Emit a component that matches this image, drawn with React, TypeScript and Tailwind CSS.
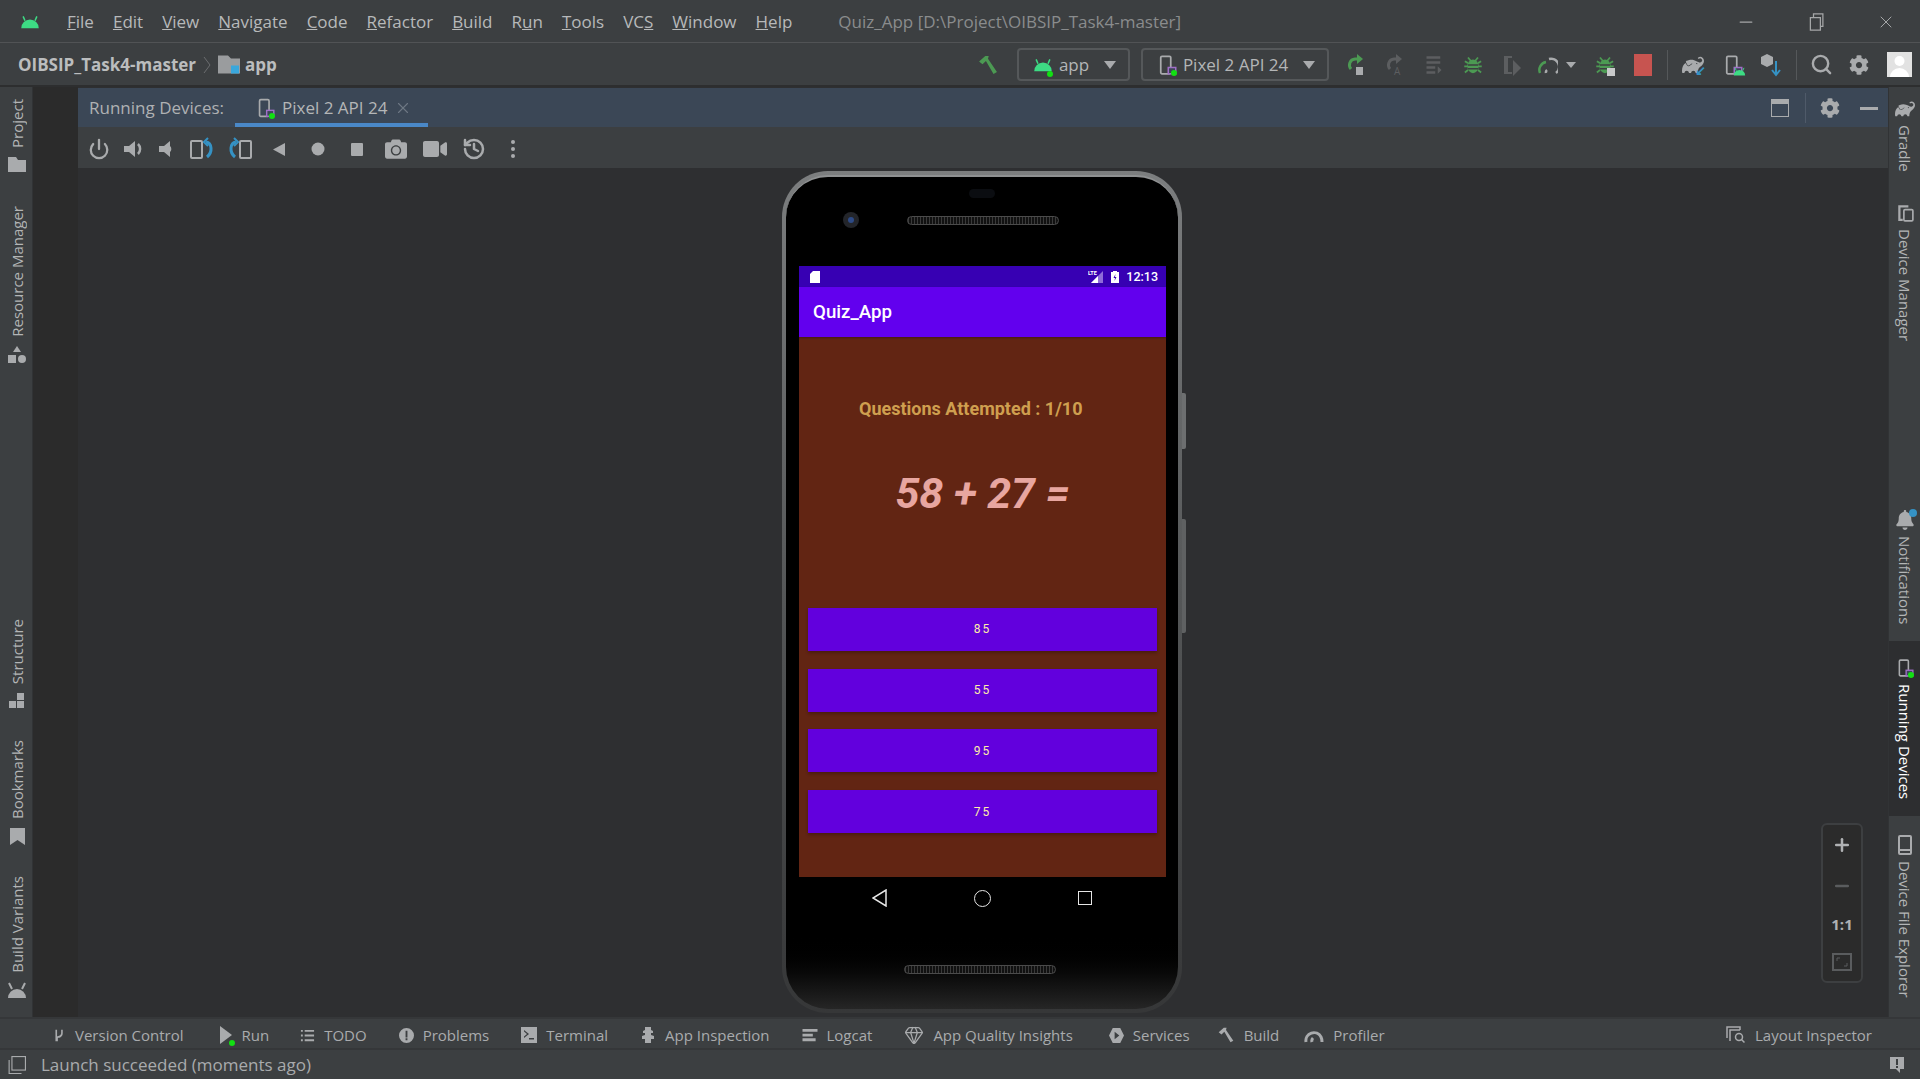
import type { ReactNode } from "react";
import { FaBell, FaCamera, FaCog, FaVideo } from "react-icons/fa";
import { SiGradle } from "react-icons/si";
import { Gem, History, Minus, Plus, Power, Search, X } from "lucide-react";

const menu = [
  ["", "F", "ile"],
  ["", "E", "dit"],
  ["", "V", "iew"],
  ["", "N", "avigate"],
  ["", "C", "ode"],
  ["", "R", "efactor"],
  ["", "B", "uild"],
  ["R", "u", "n"],
  ["", "T", "ools"],
  ["VC", "S", ""],
  ["", "W", "indow"],
  ["", "H", "elp"],
];

function Ic({ children, className = "" }: { children: ReactNode; className?: string }) {
  return (
    <svg viewBox="0 0 16 16" fill="currentColor" className={className}>
      {children}
    </svg>
  );
}

function Android({ className = "" }: { className?: string }) {
  return (
    <Ic className={className}>
      <path d="M1 13a7 7 0 0 1 14 0z" />
      <path d="M4 7 2.500 3.500M12 7l1.500-3.500" stroke="currentColor" strokeWidth="1.200" />
    </Ic>
  );
}

function GreenDot({ className = "" }: { className?: string }) {
  return <span className={`absolute h-[6px] w-[6px] rounded-full bg-[#12e012] ${className}`} />;
}

function PhoneGlyph({ className = "" }: { className?: string }) {
  return (
    <Ic className={className}>
      <rect x="3" y="1" width="8" height="14" rx="1" fill="none" stroke="currentColor" strokeWidth="1.400" />
      <rect x="9" y="10" width="6" height="5" fill="#3c4757" stroke="#9f6fc8" strokeWidth="1.200" />
    </Ic>
  );
}

function Hammer({ className = "" }: { className?: string }) {
  return (
    <Ic className={className}>
      <path d="M1.500 5.500 6 1.500h2.500L8 3.500l6.500 9.500-2.500 1.500L6.500 5 4 7.500z" />
    </Ic>
  );
}

function Bug({ className = "" }: { className?: string }) {
  return (
    <Ic className={className}>
      <ellipse cx="8" cy="9" rx="4.500" ry="5.500" />
      <path d="M4 2l2.500 3M12 2 9.500 5M1 9h14M1.500 14 4 12M14.500 14 12 12M1.500 5 4 6.500M14.500 5 12 6.500" stroke="currentColor" strokeWidth="1.400" fill="none" />
      <path d="M4 8h8M4 11h8" stroke="#3c3f41" strokeWidth="1.200" />
    </Ic>
  );
}

function Combo({ icon, label, width }: { icon: ReactNode; label: string; width: string }) {
  return (
    <div className={`flex h-[33px] shrink-0 items-center justify-between rounded-[4px] border-2 border-[#55585a] pl-[14px] pr-[12px] ${width}`}>
      <div className="flex items-center gap-[6px]">
        {icon}
        <span className="whitespace-nowrap text-[17px] leading-[20px] text-[#b4b6b7]">{label}</span>
      </div>
      <span className="h-0 w-0 border-x-[6px] border-t-[8px] border-x-transparent border-t-[#a9abad]" />
    </div>
  );
}

function SideLeft({ label, icon }: { label: string; icon: ReactNode }) {
  return (
    <div className="flex flex-col items-center gap-[9px]">
      <span className="rotate-180 text-[15px] leading-[18px] text-[#b3b5b6] [writing-mode:vertical-rl]">{label}</span>
      {icon}
    </div>
  );
}

function SideRight({ label, icon, active = false }: { label: string; icon: ReactNode; active?: boolean }) {
  return (
    <div className={`flex flex-col items-center gap-[6px] ${active ? "bg-[#2d2e30] py-[17px]" : ""}`}>
      {icon}
      <span className={`text-[15px] leading-[18px] [writing-mode:vertical-rl] ${active ? "text-white" : "text-[#b3b5b6]"}`}>{label}</span>
    </div>
  );
}

function BottomItem({ icon, label, className = "" }: { icon: ReactNode; label: string; className?: string }) {
  return (
    <div className={`flex items-center gap-[9px] ${className}`}>
      {icon}
      <span>{label}</span>
    </div>
  );
}

function Phone() {
  return (
    <div className="relative mt-[3px] h-[842px] w-[400px] rounded-[46px] bg-gradient-to-b from-[#7c7e7f] via-[#555758] to-[#363738] p-[4px]">
      <span className="absolute -right-[4px] top-[222px] h-[56px] w-[4px] rounded-r-[2px] bg-[#6d6f70]" />
      <span className="absolute -right-[4px] top-[348px] h-[114px] w-[4px] rounded-r-[2px] bg-[#5f6162]" />

      <div className="flex h-full w-full flex-col overflow-hidden rounded-[42px] border-t-2 border-[#8f9192] bg-gradient-to-b from-[#000000] from-[91%] to-[#262626]">
        <div className="flex h-[89px] shrink-0 flex-col">
          <div className="mx-auto mt-[12px] h-[9px] w-[26px] rounded-full bg-[#0b0d11]" />
          <div className="mt-[14px] flex items-center pl-[57px]">
            <div className="flex h-[16px] w-[16px] items-center justify-center rounded-full bg-[#23252a]">
              <span className="h-[6px] w-[6px] rounded-full bg-[#2d4a86]" />
            </div>
            <div className="ml-[48px] h-[9px] w-[152px] rounded-full border border-[#4b4b4b] bg-[repeating-linear-gradient(90deg,#3a3a3a_0,#3a3a3a_1px,#111_1px,#111_3px)]" />
          </div>
        </div>

        <div className="ml-[13px] flex h-[611px] w-[367px] shrink-0 flex-col bg-[#622513] font-['Roboto',sans-serif]">
          <div className="flex h-[21px] shrink-0 items-center justify-between bg-[#3700b3] pl-[11px] pr-[8px] text-white">
            <svg viewBox="0 0 10 12" fill="currentColor" className="h-[12px] w-[10px]">
              <path d="M3 0h7v12H0V3z" />
            </svg>
            <div className="flex items-center">
              <svg viewBox="0 0 16 13" className="h-[13px] w-[16px]">
                <path d="M15 1v12H3z" fill="#8f6cd9" />
                <path d="M10 6v7H3z" fill="#fff" />
                <text x="0" y="5" fontSize="5.500" fontWeight="700" fill="#fff">LTE</text>
              </svg>
              <svg viewBox="0 0 8 12" fill="currentColor" className="ml-[7px] h-[12px] w-[8px]">
                <path d="M2 1V0h4v1h2v11H0V1z" />
                <path d="M4.500 3 2.500 7H4l-.5 3 2-4H4z" fill="#3700b3" />
              </svg>
              <span className="ml-[7px] mt-[2px] text-[12.500px] font-medium leading-none">12:13</span>
            </div>
          </div>

          <div className="flex h-[50px] shrink-0 items-center bg-[#6200ee] pl-[14px] text-[18.700px] font-medium text-white shadow-[0_1px_2px_rgba(0,0,0,0.3)]">
            Quiz_App
          </div>

          <div className="flex min-h-0 flex-1 flex-col">
            <p className="ml-[60px] mt-[61px] text-[18px] font-bold leading-[21px] text-[#cf9f4f]">Questions Attempted : 1/10</p>
            <p className="mt-[49px] text-center text-[43px] font-bold italic leading-[50px] text-[#e8a6a0]">58 + 27 =</p>
            <div className="mt-auto flex flex-col gap-[17.700px] px-[9px] pb-[44px]">
              {["85", "55", "95", "75"].map((v) => (
                <div
                  key={v}
                  className="flex h-[43px] items-center justify-center bg-[#6200dd] text-[12px] font-normal tracking-[2px] text-[#ffeea8] shadow-[0_2px_3px_rgba(0,0,0,0.25)]"
                >
                  {v}
                </div>
              ))}
            </div>
          </div>
        </div>

        <div className="flex min-h-0 flex-1 flex-col text-[#e6e6e6]">
          <div className="mt-[12px] flex items-center pl-[86px]">
            <svg viewBox="0 0 15 18" fill="none" stroke="currentColor" strokeWidth="1.500" className="h-[18px] w-[15px]">
              <path d="M14 1v16L1 9z" />
            </svg>
            <span className="ml-[87px] h-[17px] w-[17px] rounded-full border-[1.500px] border-current" />
            <span className="ml-[87px] h-[14px] w-[14px] border-[1.500px] border-current" />
          </div>
          <div className="ml-[118px] mt-[58px] h-[9px] w-[152px] rounded-full border border-[#4b4b4b] bg-[repeating-linear-gradient(90deg,#3a3a3a_0,#3a3a3a_1px,#111_1px,#111_3px)]" />
        </div>
      </div>
    </div>
  );
}

export default function App() {
  return (
    <div className="flex h-[1079px] w-[1920px] flex-col overflow-hidden bg-[#3c3f41] font-['Open_Sans',sans-serif] text-[#b4b6b7]">
      {/* title bar */}
      <div className="flex h-[43px] shrink-0 items-center border-b border-[#515355] pr-[24px] pt-[1px] text-[17px]">
        <Android className="ml-[20px] h-[20px] w-[20px] text-[#3ddc84]" />
        <div className="ml-[27px] flex gap-[19px] text-[#b7b9ba]">
          {menu.map(([before, key, after], i) => (
            <span key={i}>
              {before}
              <u>{key}</u>
              {after}
            </span>
          ))}
        </div>
        <span className="ml-[46px] text-[#8a8c8d]">{"Quiz_App [D:\\Project\\OIBSIP_Task4-master]"}</span>
        <div className="ml-auto flex items-center gap-[50px] text-[#a5a7a8]">
          <Minus className="h-[20px] w-[20px]" strokeWidth={1.500} />
          <svg viewBox="0 0 16 16" fill="none" stroke="currentColor" className="h-[20px] w-[20px]">
            <rect x="3.500" y="4.500" width="8" height="10" />
            <path d="M6 4.500v-3h7.500v10h-2" />
          </svg>
          <X className="h-[20px] w-[20px]" strokeWidth={1.200} />
        </div>
      </div>

      {/* project toolbar */}
      <div className="flex h-[44px] shrink-0 items-center border-b-2 border-[#2d2e2f] pl-[18px] pt-[1px]">
        <span className="text-[17px] font-bold text-[#bbbdbe]">OIBSIP_Task4-master</span>
        <svg viewBox="0 0 8 18" fill="none" stroke="#6b6d6f" className="ml-[7px] h-[20px] w-[8px]">
          <path d="m1 1 6 8-6 8" />
        </svg>
        <svg viewBox="0 0 22 18" className="ml-[7px] h-[19px] w-[22px]">
          <path d="M0 0h10l3 3h9v15H0z" fill="#9a9c9e" />
          <rect x="13" y="10" width="8" height="8" fill="#3aa7dc" />
        </svg>
        <span className="ml-[5px] text-[17px] font-bold text-[#bbbdbe]">app</span>

        <Hammer className="ml-[700px] h-[22px] w-[22px] text-[#4c9a53]" />
        <div className="ml-[18px]">
          <Combo
            width="w-[113px]"
            label="app"
            icon={
              <span className="relative">
                <Android className="h-[20px] w-[20px] text-[#3ddc84]" />
                <GreenDot className="-bottom-[2px] right-0" />
              </span>
            }
          />
        </div>
        <div className="ml-[11px]">
          <Combo
            width="w-[188px]"
            label="Pixel 2 API 24"
            icon={
              <span className="relative">
                <PhoneGlyph className="h-[22px] w-[20px] text-[#a9abad]" />
                <GreenDot className="bottom-0 right-0" />
              </span>
            }
          />
        </div>

        <div className="ml-[17px] flex items-center gap-[19px]">
          <svg viewBox="0 0 20 22" className="h-[22px] w-[20px]">
            <path d="M13 5H9a6 6 0 0 0-4 10" fill="none" stroke="#4c9a53" strokeWidth="3" />
            <path d="M11 0l6 5-6 5z" fill="#4c9a53" />
            <rect x="10" y="13" width="7" height="8" fill="#a9abad" />
          </svg>
          <svg viewBox="0 0 20 22" className="h-[22px] w-[20px]">
            <path d="M13 5H9a6 6 0 0 0-4 10" fill="none" stroke="#5c5e60" strokeWidth="3" />
            <path d="M11 0l6 5-6 5z" fill="#5c5e60" />
            <text x="9" y="21" fontSize="10" fill="#5c5e60">A</text>
          </svg>
          <Ic className="h-[22px] w-[20px] text-[#5c5e60]">
            <path d="M2 1h11v2H2zM2 5h11v2H2zM2 9h7v2H2zM2 13h7v2H2zM11 9l3 3-3 3z" />
          </Ic>
          <Bug className="h-[22px] w-[20px] text-[#4c9a53]" />
          <svg viewBox="0 0 20 22" fill="#5c5e60" className="h-[22px] w-[20px]">
            <path d="M2 2h8v2H6v14h4v2H2zM11 6l8 8-8 8z" />
          </svg>
          <div className="flex items-center gap-[8px]">
            <svg viewBox="0 0 20 18" fill="none" strokeWidth="2.500" className="-ml-[3px] h-[18px] w-[20px]">
              <path d="M2 17a8 8 0 0 1 6-11" stroke="#4c9a53" />
              <path d="M8 17a3 3 0 0 1 1-3M11 3a8 8 0 0 1 7 14" stroke="#a9abad" />
            </svg>
            <span className="h-0 w-0 border-x-[5px] border-t-[6px] border-x-transparent border-t-[#a9abad]" />
          </div>
          <span className="relative">
            <Bug className="h-[22px] w-[20px] text-[#4c9a53]" />
            <span className="absolute bottom-0 right-0 h-[8px] w-[8px] bg-[#c8c9ca]" />
          </span>
          <span className="h-[22px] w-[18px] bg-[#c75450]" />
        </div>
        <span className="ml-[15px] h-[30px] w-px bg-[#55585a]" />
        <div className="ml-[13px] flex items-center gap-[18px]">
          <span className="relative">
            <SiGradle className="h-[22px] w-[24px] text-[#a9abad]" />
            <span className="absolute -bottom-[1px] -right-[1px] text-[13px] font-bold leading-none text-[#3592c4]">↙</span>
          </span>
          <span className="relative">
            <PhoneGlyph className="h-[24px] w-[20px] text-[#a9abad]" />
            <Android className="absolute -bottom-[1px] -right-[3px] h-[13px] w-[13px] text-[#3ddc84]" />
          </span>
          <svg viewBox="0 0 20 24" className="h-[24px] w-[20px]">
            <path d="M6 1l6 3v7l-6 3-6-3V4z" fill="#a9abad" />
            <path d="M15 8v14M11 17l4 5 4-5" fill="none" stroke="#3592c4" strokeWidth="2" />
          </svg>
        </div>
        <span className="ml-[15px] h-[30px] w-px bg-[#55585a]" />
        <Search className="ml-[13px] h-[23px] w-[23px] text-[#a9abad]" strokeWidth={2.500} />
        <FaCog className="ml-[16px] h-[20px] w-[20px] text-[#a9abad]" />
        <svg viewBox="0 0 25 25" className="ml-[18px] h-[25px] w-[25px]">
          <rect width="25" height="25" fill="#e2e2e2" />
          <circle cx="12.500" cy="9" r="5" fill="#fff" />
          <path d="M3 25a9.500 9 0 0 1 19 0z" fill="#fff" />
        </svg>
      </div>

      <div className="flex min-h-0 flex-1">
        {/* left tool strip */}
        <div className="flex h-full w-[33px] shrink-0 flex-col justify-between border-r border-[#313335] pb-[19px] pl-[2px] pt-[12px]">
          <div className="flex flex-col gap-[34px]">
            <SideLeft
              label="Project"
              icon={
                <svg viewBox="0 0 18 15" fill="#a9abad" className="h-[15px] w-[18px]">
                  <path d="M0 0h8l2 3h8v12H0z" />
                </svg>
              }
            />
            <SideLeft
              label="Resource Manager"
              icon={
                <svg viewBox="0 0 18 18" fill="#a9abad" className="h-[18px] w-[18px]">
                  <path d="M9 0l4 6H5z" />
                  <rect y="9" width="8" height="8" />
                  <circle cx="14" cy="13" r="4" />
                </svg>
              }
            />
          </div>
          <div className="flex flex-col gap-[31px]">
            <SideLeft
              label="Structure"
              icon={
                <svg viewBox="0 0 16 16" fill="#a9abad" className="h-[16px] w-[16px]">
                  <rect x="8" y="0" width="7" height="7" />
                  <rect x="0" y="8" width="7" height="7" />
                  <rect x="8" y="8" width="7" height="7" />
                </svg>
              }
            />
            <SideLeft
              label="Bookmarks"
              icon={
                <svg viewBox="0 0 15 17" fill="#a9abad" className="h-[17px] w-[15px]">
                  <path d="M0 0h15v17l-7.500-5L0 17z" />
                </svg>
              }
            />
            <SideLeft
              label="Build Variants"
              icon={
                <svg viewBox="0 0 18 16" fill="#a9abad" className="h-[16px] w-[18px]">
                  <path d="M0 16a9 9 0 0 1 18 0z" />
                  <path d="M4 7 1 1M14 7l3-6" stroke="#a9abad" strokeWidth="2" />
                </svg>
              }
            />
          </div>
        </div>

        <div className="w-[45px] shrink-0 bg-[#2b2b2b]" />

        {/* running devices panel */}
        <div className="flex min-w-0 flex-1 flex-col bg-[#2e2f31]">
          <div className="mt-[1px] flex h-[39px] shrink-0 items-center bg-[#3b4756] pl-[11px] pr-[10px] pt-[1px] text-[17px]">
            <span className="text-[#afb1b3]">Running Devices:</span>
            <div className="ml-[11px] flex h-full items-center gap-[7px] border-b-[4px] border-[#4a88c7] pl-[21px] pr-[16px] pt-[4px]">
              <span className="relative">
                <PhoneGlyph className="h-[22px] w-[19px] text-[#a9abad]" />
                <GreenDot className="bottom-0 right-0" />
              </span>
              <span className="text-[#b4b6b7]">Pixel 2 API 24</span>
              <X className="h-[18px] w-[18px] text-[#6e7884]" strokeWidth={1.500} />
            </div>
            <div className="ml-auto flex items-center">
              <svg viewBox="0 0 18 18" className="h-[18px] w-[18px]">
                <rect x="0.500" y="0.500" width="17" height="17" fill="none" stroke="#a9abad" />
                <rect width="18" height="5" fill="#a9abad" />
              </svg>
              <span className="ml-[16px] h-[30px] w-px bg-[#4f5a69]" />
              <FaCog className="ml-[14px] h-[20px] w-[20px] text-[#a9abad]" />
              <span className="ml-[20px] h-[3px] w-[18px] bg-[#a9abad]" />
            </div>
          </div>

          <div className="flex h-[41px] shrink-0 items-center gap-[15px] bg-[#3c3f41] pl-[9px] pt-[2px] text-[#a9abad]">
            <div className="flex items-center gap-[10px]">
              <Power className="h-[24px] w-[24px] p-[1px]" strokeWidth={2.500} />
              <svg viewBox="0 0 24 24" fill="currentColor" className="h-[24px] w-[24px]">
                <path d="M3 9h5l6-5v16l-6-5H3z" />
                <path d="M17 7a7 7 0 0 1 0 10" fill="none" stroke="currentColor" strokeWidth="2.500" />
              </svg>
              <svg viewBox="0 0 24 24" fill="currentColor" className="h-[24px] w-[24px]">
                <path d="M4 9h5l6-5v16l-6-5H4z" />
                <path d="M15 9a4 4 0 0 1 0 6z" />
              </svg>
            </div>
            <svg viewBox="0 0 24 24" fill="none" strokeWidth="2" className="-ml-[4px] h-[24px] w-[24px]">
              <rect x="1" y="4" width="11" height="17" rx="1" stroke="currentColor" />
              <path d="M16 5c6 1 7 10 1 15" stroke="#3592c4" strokeWidth="3" />
              <path d="M18 1l-4 4 4 4" stroke="#3592c4" strokeWidth="2" />
            </svg>
            <svg viewBox="0 0 24 24" fill="none" strokeWidth="2" className="-ml-[1px] h-[24px] w-[24px]">
              <rect x="12" y="4" width="11" height="17" rx="1" stroke="currentColor" />
              <path d="M8 5C2 6 1 15 7 20" stroke="#3592c4" strokeWidth="3" />
              <path d="M6 1l4 4-4 4" stroke="#3592c4" strokeWidth="2" />
            </svg>
            <svg viewBox="0 0 24 24" fill="currentColor" className="h-[24px] w-[24px]">
              <path d="M18 6v13L6 12.500z" />
            </svg>
            <svg viewBox="0 0 24 24" fill="currentColor" className="h-[24px] w-[24px]">
              <circle cx="12" cy="12" r="6.500" />
            </svg>
            <svg viewBox="0 0 24 24" fill="currentColor" className="h-[24px] w-[24px]">
              <rect x="6" y="6" width="12" height="13" rx="1" />
            </svg>
            <FaCamera className="h-[24px] w-[24px] p-[1px]" />
            <FaVideo className="h-[24px] w-[24px]" />
            <History className="h-[24px] w-[24px]" strokeWidth={2.500} />
            <svg viewBox="0 0 24 24" fill="currentColor" className="h-[24px] w-[24px]">
              <circle cx="12" cy="5" r="2" />
              <circle cx="12" cy="12" r="2" />
              <circle cx="12" cy="19" r="2" />
            </svg>
          </div>

          <div className="relative flex min-h-0 flex-1 justify-center pr-[2px]">
            <Phone />
            <div className="absolute bottom-[34px] right-[25px] flex h-[160px] w-[42px] flex-col items-center justify-between rounded-[6px] border-2 border-[#3d3f41] bg-[#2b2b2b] py-[10px] text-[#afb1b3]">
              <Plus className="h-[20px] w-[20px]" strokeWidth={3} />
              <Minus className="h-[20px] w-[20px] text-[#5a5c5e]" strokeWidth={3} />
              <span className="text-[15px] font-bold leading-none">1:1</span>
              <svg viewBox="0 0 20 18" fill="none" stroke="#5a5c5e" strokeWidth="2" className="h-[18px] w-[20px]">
                <rect x="1" y="1" width="18" height="16" />
                <path d="M5 8V5h3M15 10v3h-3" strokeWidth="1" />
              </svg>
            </div>
          </div>
        </div>

        {/* right tool strip */}
        <div className="flex h-full w-[32px] shrink-0 flex-col justify-between border-l border-[#313335] pb-[19px] pt-[12px]">
          <div className="flex flex-col gap-[31px]">
            <SideRight label="Gradle" icon={<SiGradle className="h-[20px] w-[20px] text-[#a9abad]" />} />
            <SideRight
              label="Device Manager"
              icon={
                <Ic className="h-[20px] w-[18px] text-[#a9abad]">
                  <path d="M2 1h9v2H4v10h2v2H2z" />
                  <rect x="7" y="5" width="8" height="10" rx="1" fill="none" stroke="currentColor" strokeWidth="1.500" />
                </Ic>
              }
            />
          </div>
          <div className="flex flex-col">
            <SideRight
              label="Notifications"
              icon={
                <span className="relative">
                  <FaBell className="h-[20px] w-[18px] text-[#a9abad]" />
                  <span className="absolute -right-[3px] -top-[1px] h-[8px] w-[8px] rounded-full bg-[#3592c4]" />
                </span>
              }
            />
            <div className="mt-[17px]">
              <SideRight
                active
                label="Running Devices"
                icon={
                  <span className="relative">
                    <PhoneGlyph className="h-[20px] w-[18px] text-[#a9abad]" />
                    <GreenDot className="bottom-0 right-0" />
                  </span>
                }
              />
            </div>
            <div className="mt-[19px]">
              <SideRight
                label="Device File Explorer"
                icon={
                  <svg viewBox="0 0 14 20" fill="none" stroke="#a9abad" strokeWidth="2" className="h-[20px] w-[14px]">
                    <rect x="1" y="1" width="12" height="18" rx="1" />
                    <path d="M1 15h12" />
                  </svg>
                }
              />
            </div>
          </div>
        </div>
      </div>

      {/* tool window bar */}
      <div className="flex h-[31px] shrink-0 items-center gap-[32px] border-t-2 border-t-[#353739] pl-[53px] pr-[48px] pt-[3px] text-[15px] text-[#a9abad]">
        <BottomItem
          label="Version Control"
          icon={
            <Ic className="h-[17px] w-[13px]">
              <path d="M3 1h2v8c2 0 5-1 5-4V1h2v4c0 5-4 6-6 6v4H3z" />
            </Ic>
          }
        />
        <BottomItem
          className="ml-[3px]"
          label="Run"
          icon={
            <span className="relative">
              <svg viewBox="0 0 14 18" fill="currentColor" className="h-[18px] w-[14px]">
                <path d="M1 0l12 9-12 9z" />
              </svg>
              <GreenDot className="-bottom-[2px] -right-[2px]" />
            </span>
          }
        />
        <BottomItem
          className="-ml-[1px]"
          label="TODO"
          icon={
            <Ic className="h-[15px] w-[15px]">
              <path d="M1 2h2v2H1zM5 2h10v2H5zM1 7h2v2H1zM5 7h10v2H5zM1 12h2v2H1zM5 12h10v2H5z" />
            </Ic>
          }
        />
        <BottomItem
          label="Problems"
          icon={
            <Ic className="h-[15px] w-[15px]">
              <path fillRule="evenodd" d="M8 0a8 8 0 1 0 0 16A8 8 0 0 0 8 0zM7 3h2v7H7zM7 11h2v2H7z" />
            </Ic>
          }
        />
        <BottomItem
          label="Terminal"
          icon={
            <Ic className="h-[16px] w-[16px]">
              <path fillRule="evenodd" d="M0 0h16v16H0zM3 3v1.500L6 7 3 9.500V11l5-4zM8 11v1.500h5V11z" />
            </Ic>
          }
        />
        <BottomItem
          label="App Inspection"
          icon={
            <Ic className="h-[18px] w-[16px]">
              <path d="M5 0h6v3l2 1v2h-2v2l3 1v3h-3v4H5v-4H2V9l3-1V6H3V4l2-1z" />
            </Ic>
          }
        />
        <BottomItem
          label="Logcat"
          icon={
            <Ic className="h-[15px] w-[16px]">
              <path d="M0 1h16v3H0zM0 6h11v3H0zM0 11h14v3H0z" />
            </Ic>
          }
        />
        <BottomItem label="App Quality Insights" icon={<Gem className="h-[20px] w-[20px]" strokeWidth={1.500} />} />
        <BottomItem
          className="ml-[4px]"
          label="Services"
          icon={
            <Ic className="h-[17px] w-[15px]">
              <path fillRule="evenodd" d="M4 0h8l4 8-4 8H4L0 8zM6 4v8l5-4z" />
            </Ic>
          }
        />
        <BottomItem className="-ml-[5px]" label="Build" icon={<Hammer className="h-[18px] w-[18px]" />} />
        <BottomItem
          className="-ml-[7px]"
          label="Profiler"
          icon={
            <svg viewBox="0 0 20 16" fill="none" stroke="currentColor" strokeWidth="3" className="h-[16px] w-[20px]">
              <path d="M2 15a8 8 0 0 1 15-5c1 2 1 3 1 5M8 15a4 4 0 0 1 1-4" />
            </svg>
          }
        />
        <div className="ml-auto">
          <BottomItem
            label="Layout Inspector"
            icon={
              <svg viewBox="0 0 20 18" fill="none" stroke="currentColor" strokeWidth="1.500" className="h-[18px] w-[20px]">
                <path d="M1 12V1h13v3" />
                <path d="M4 15V4h10" />
                <circle cx="13" cy="11" r="3.500" />
                <path d="m15.500 13.500 3 3" />
              </svg>
            }
          />
        </div>
      </div>

      {/* status bar */}
      <div className="flex h-[31px] shrink-0 items-center border-t-2 border-t-[#353739] pl-[8px] pr-[16px] text-[17px] text-[#a9abad]">
        <svg viewBox="0 0 16 16" fill="none" stroke="currentColor" className="h-[18px] w-[18px]">
          <rect x="3.500" y="0.500" width="12" height="12" />
          <path d="M1 3.500v12h11" />
        </svg>
        <span className="ml-[15px]">Launch succeeded (moments ago)</span>
        <svg viewBox="0 0 14 16" className="ml-auto h-[16px] w-[14px]">
          <path d="M0 0h14v12h-4v4l-4-4H0z" fill="#a9abad" />
          <path d="M6 2h2v6H6zM6 9h2v2H6z" fill="#3c3f41" />
        </svg>
      </div>
    </div>
  );
}
